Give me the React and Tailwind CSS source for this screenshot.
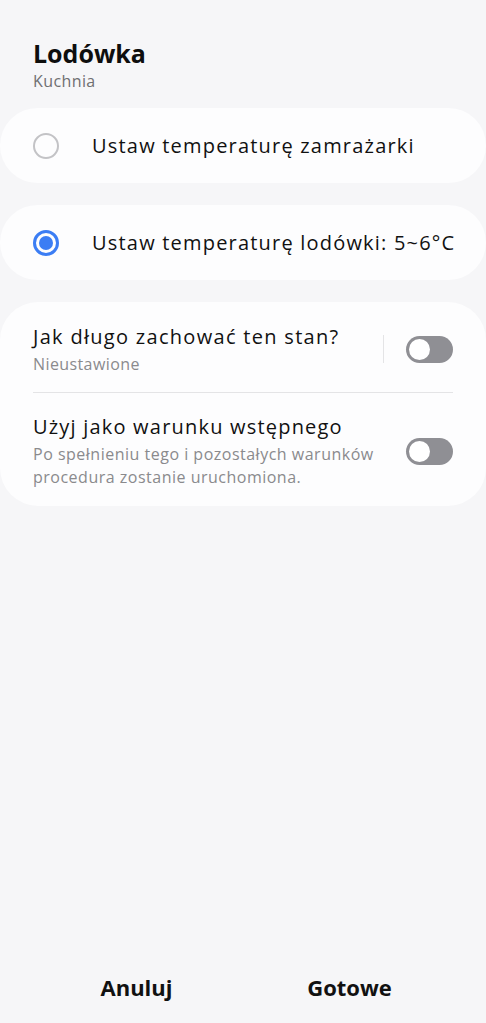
import React from 'react';

const font = { fontFamily: '"Open Sans", "Noto Sans", sans-serif' };

const Toggle = () => (
  <div className="w-[47px] h-[27px] rounded-full bg-[#8f8f94] flex items-center px-[3px] shrink-0">
    <div className="w-[21px] h-[21px] rounded-full bg-white" />
  </div>
);

const RadioRow = ({ label, checked }) => (
  <div className="bg-[#fdfdfe] rounded-[38px] h-[75px] flex items-center pl-[33px] pr-4">
    {checked ? (
      <div className="w-[26px] h-[26px] rounded-full border-[3px] border-[#3b7df4] flex items-center justify-center shrink-0">
        <div className="w-[14px] h-[14px] rounded-full bg-[#3b7df4]" />
      </div>
    ) : (
      <div className="w-[26px] h-[26px] rounded-full border-2 border-[#c3c3c6] shrink-0" />
    )}
    <span className="ml-[33px] text-[20px] tracking-[1.2px] text-[#111] whitespace-nowrap">{label}</span>
  </div>
);

export default function App() {
  return (
    <div className="h-[1023px] bg-[#f6f6f8] flex flex-col" style={font}>
      <div className="px-[33px] pt-[36px]">
        <h1 className="text-[25px] font-bold text-[#0e0e0e] leading-[34px]">Lodówka</h1>
        <p className="text-[16px] tracking-[0.4px] text-[#6f6f72] leading-[22px]">Kuchnia</p>
      </div>

      <div className="mt-[16px] flex flex-col gap-[22px]">
        <RadioRow label="Ustaw temperaturę zamrażarki" />
        <RadioRow label="Ustaw temperaturę lodówki: 5~6°C" checked />

        <div className="bg-[#fdfdfe] rounded-[38px] px-[33px]">
          <div className="flex items-center pt-[21px] pb-[17px] border-b border-[#e4e4e6]">
            <div className="flex-1">
              <p className="text-[20px] tracking-[1.3px] text-[#111] leading-[28px]">Jak długo zachować ten stan?</p>
              <p className="text-[16px] tracking-[0.4px] text-[#8a8a8d] leading-[22px] mt-[2px]">Nieustawione</p>
            </div>
            <div className="w-px h-[28px] bg-[#e4e4e6] mr-[22px]" />
            <Toggle />
          </div>
          <div className="flex items-center pt-[20px] pb-[17px]">
            <div className="flex-1">
              <p className="text-[20px] tracking-[1.2px] text-[#111] leading-[28px]">Użyj jako warunku wstępnego</p>
              <p className="text-[16px] tracking-[0.5px] text-[#8a8a8d] leading-[23px] mt-[2px]">
                Po spełnieniu tego i pozostałych warunków
                <br />
                procedura zostanie uruchomiona.
              </p>
            </div>
            <Toggle />
          </div>
        </div>
      </div>

      <div className="mt-auto mb-[22px] flex">
        <button className="flex-1 text-[22px] font-bold text-[#111] h-[30px] pl-[30px]">Anuluj</button>
        <button className="flex-1 text-[22px] font-bold text-[#111] h-[30px] pr-[30px]">Gotowe</button>
      </div>
    </div>
  );
}
